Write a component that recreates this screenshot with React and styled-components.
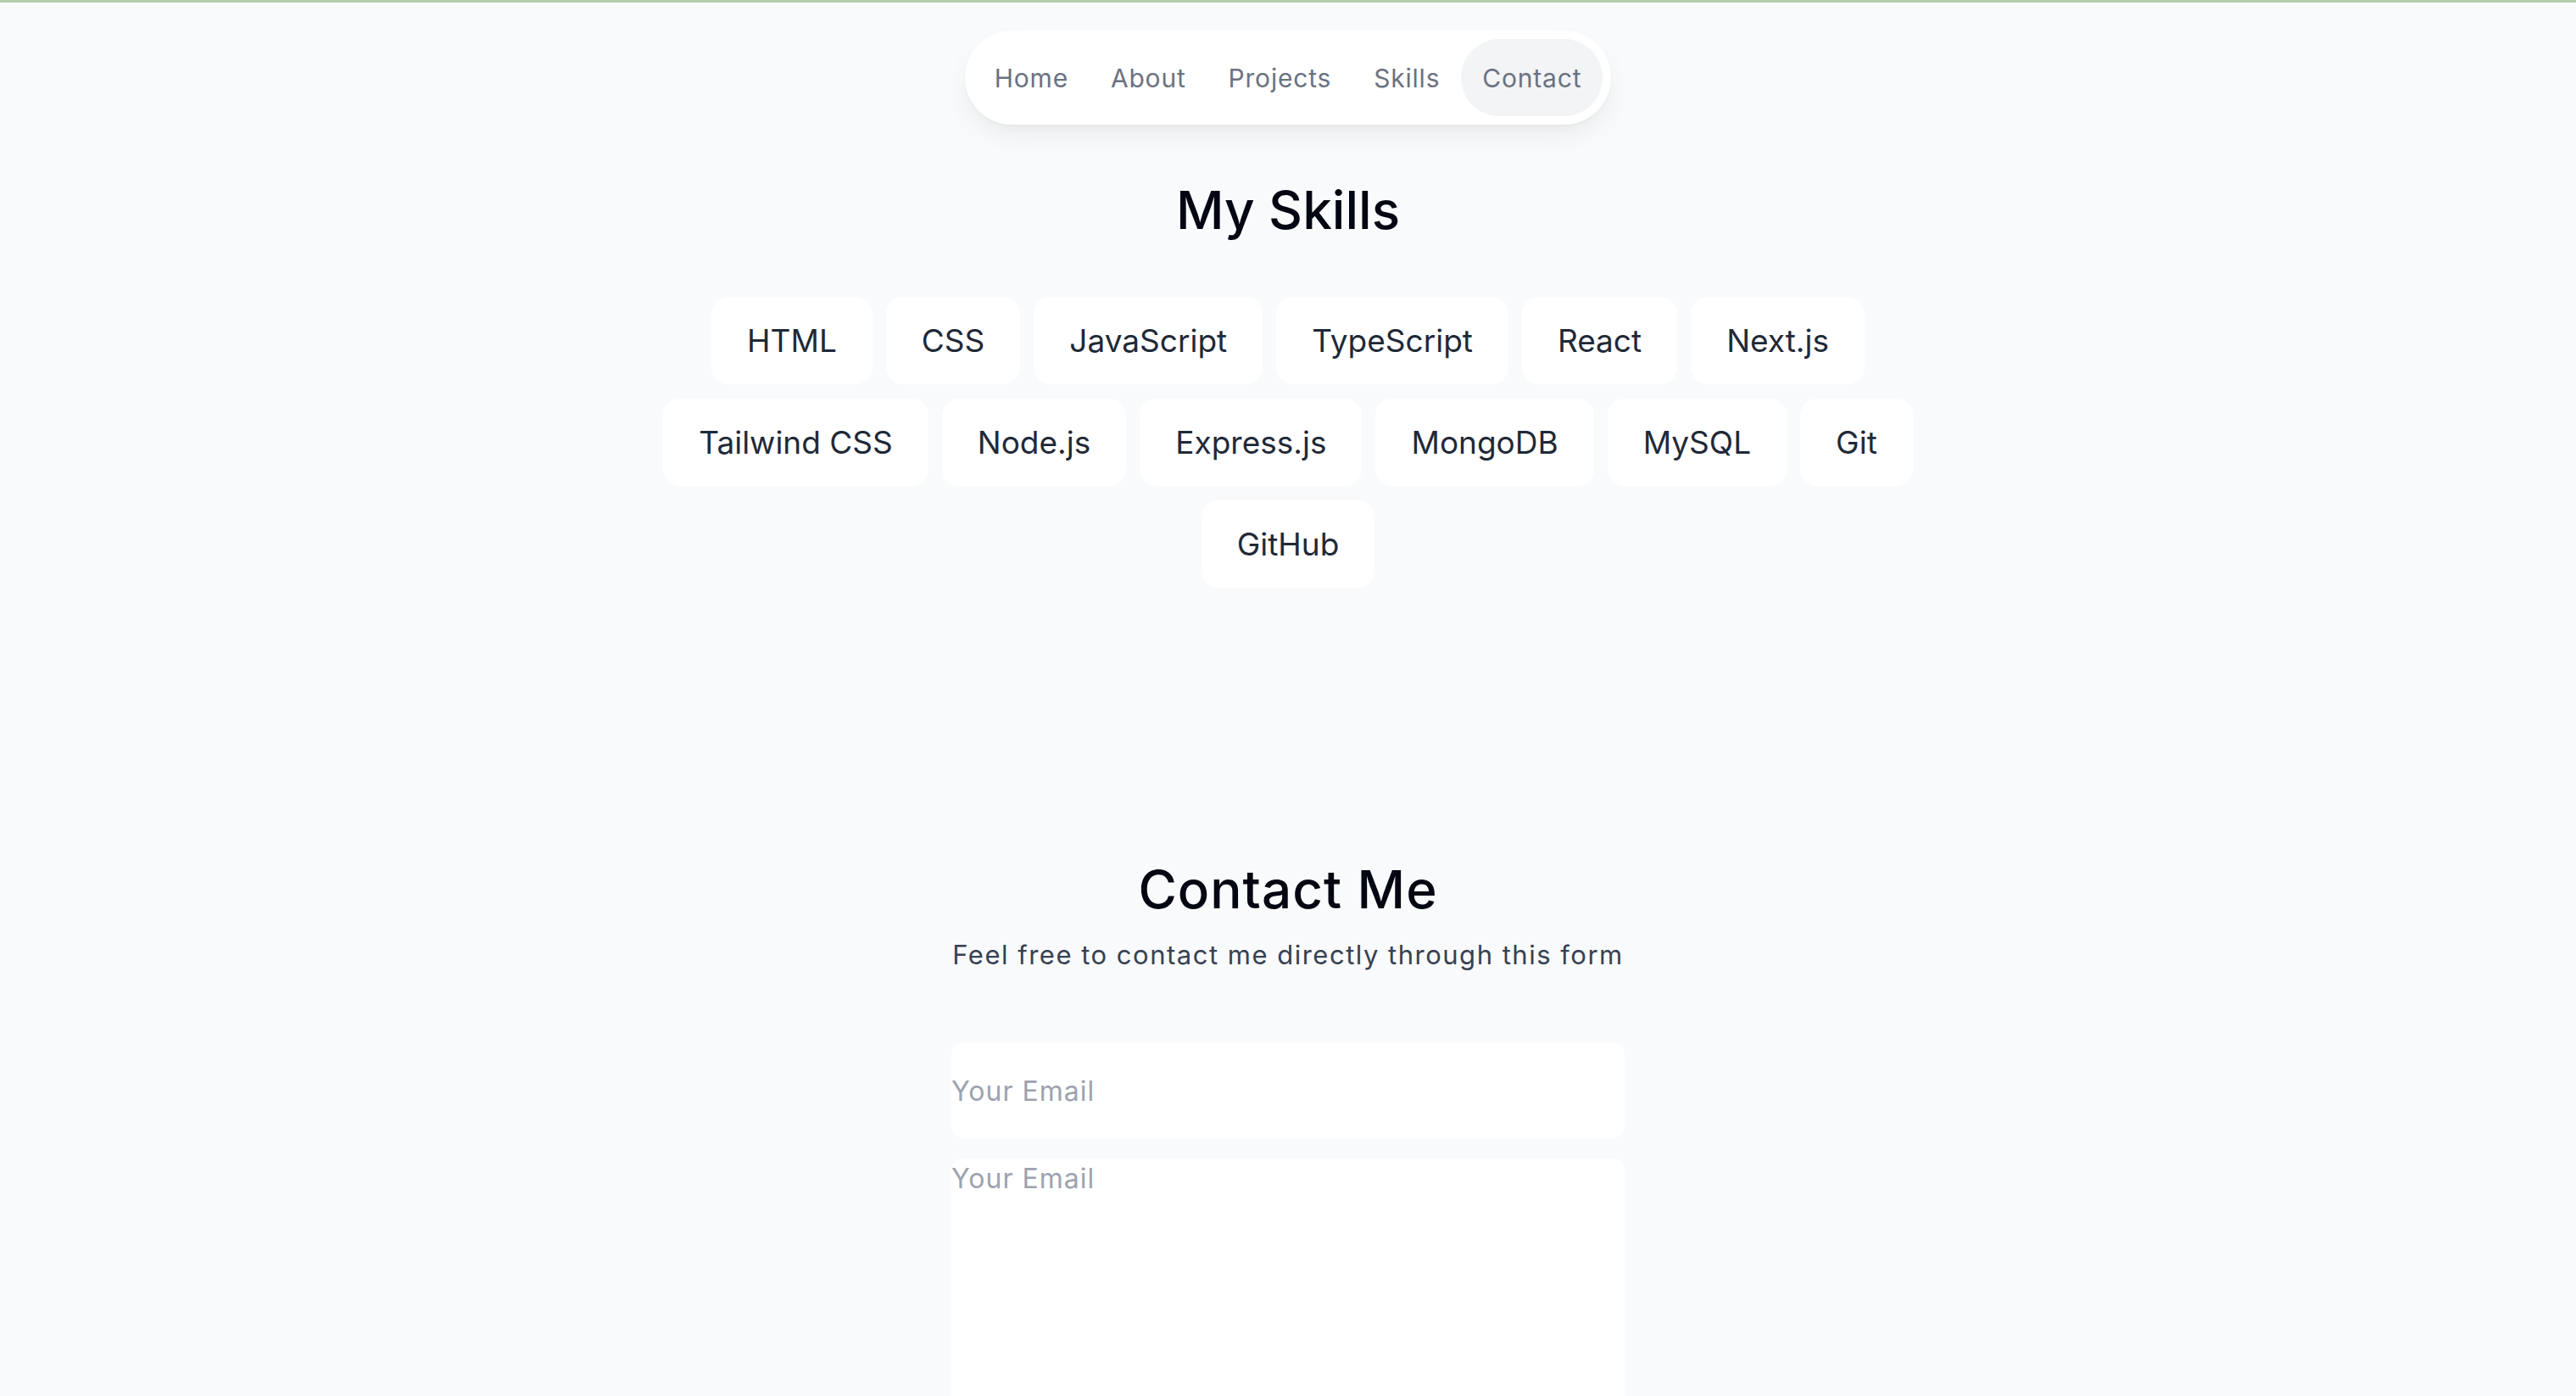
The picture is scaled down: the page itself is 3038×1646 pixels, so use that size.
import React from 'react'
import styled, { createGlobalStyle } from 'styled-components';

const skills = [
  'HTML', 'CSS', 'JavaScript', 'TypeScript', 'React', 'Next.js',
  'Tailwind CSS', 'Node.js', 'Express.js', 'MongoDB', 'MySQL', 'Git', 'GitHub'
];

const links = ['Home', 'About', 'Projects', 'Skills', 'Contact'];

const App = () => {
  return (
    <>
      <GlobalStyle />
      <Pagina>
        <Navegacion>
          {links.map((link) => (
            <Enlace key={link} href={'#' + link.toLowerCase()} $activo={link === 'Contact'}>
              {link}
            </Enlace>
          ))}
        </Navegacion>

        <Seccion id="skills">
          <Titulo>My Skills</Titulo>
          <ListaSkills>
            {skills.map((skill) => (
              <Skill key={skill}>{skill}</Skill>
            ))}
          </ListaSkills>
        </Seccion>

        <Seccion id="contact" $arriba="318px">
          <Titulo $espaciado="1px">Contact Me</Titulo>
          <Subtitulo>Feel free to contact me directly through this form</Subtitulo>
          <Formulario onSubmit={(e) => e.preventDefault()}>
            <Input type="email" name="email" placeholder="Your Email" />
            <Mensaje name="mensaje" placeholder="Your Email" />
          </Formulario>
        </Seccion>
      </Pagina>
    </>
  );
}

const GlobalStyle = createGlobalStyle`
    * {
        box-sizing: border-box;
    }

    body {
        margin: 0;
        background: #F9FAFB;
        border-top: 3px solid #B3CEAC;
        font-family: Inter, "Noto Sans", sans-serif;
        color: #030712;
        overflow: hidden;
    }
`;

const Pagina = styled.div`
    display: flex;
    flex-direction: column;
    align-items: center;
    padding-top: 33px;
    min-height: 100vh;
`;

const Navegacion = styled.nav`
    display: flex;
    align-items: center;
    padding: 10px;
    background: #fff;
    border-radius: 999px;
    box-shadow: 0 14px 32px -6px rgba(0,0,0,.08), 0 4px 10px -4px rgba(0,0,0,.05);
`;

const Enlace = styled.a`
    display: flex;
    align-items: center;
    height: 91px;
    padding: 0 25px;
    border-radius: 999px;
    font-size: 30px;
    letter-spacing: 0.8px;
    color: #6B7280;
    text-decoration: none;
    background: ${({ $activo }) => $activo ? '#F3F4F6' : 'transparent'};
`;

const Seccion = styled.section`
    display: flex;
    flex-direction: column;
    align-items: center;
    margin-top: ${({ $arriba }) => $arriba || '63px'};
`;

const Titulo = styled.h2`
    margin: 0;
    font-size: 62px;
    line-height: 75px;
    font-weight: 500;
    letter-spacing: ${({ $espaciado }) => $espaciado || '0'};
    color: #030712;
`;

const ListaSkills = styled.div`
    display: flex;
    flex-wrap: wrap;
    justify-content: center;
    gap: 17px 16px;
    max-width: 1600px;
    margin-top: 65px;
`;

const Skill = styled.span`
    display: flex;
    align-items: center;
    height: 103px;
    padding: 0 42px;
    background: #fff;
    border-radius: 20px;
    font-size: 37px;
    color: #1F2937;
`;

const Subtitulo = styled.p`
    margin: 22px 0 0;
    font-size: 31px;
    line-height: 36px;
    letter-spacing: 1.5px;
    color: #374151;
`;

const Formulario = styled.form`
    display: flex;
    flex-direction: column;
    gap: 24px;
    width: 794px;
    margin-top: 86px;
`;

const Input = styled.input`
    height: 112px;
    padding: 0;
    border: none;
    border-radius: 14px;
    background: #fff;
    font-family: inherit;
    font-size: 32px;
    line-height: 1.5;
    letter-spacing: 1px;
    color: #1F2937;
    outline: none;

    &::placeholder {
        color: #9CA3AF;
    }
`;

const Mensaje = styled.textarea`
    height: 420px;
    padding: 0;
    border: none;
    border-radius: 14px;
    background: #fff;
    font-family: inherit;
    font-size: 32px;
    line-height: 1.5;
    letter-spacing: 1px;
    color: #1F2937;
    outline: none;
    resize: none;

    &::placeholder {
        color: #9CA3AF;
    }
`;

export default App;
